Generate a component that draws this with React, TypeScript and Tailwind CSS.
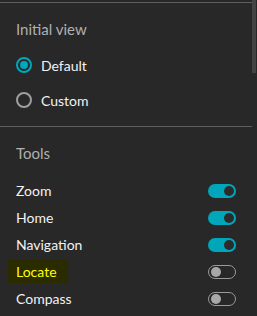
import React from "react";

const font = { fontFamily: "Lato, 'Open Sans', sans-serif" };

function Radio({ checked, label }: { checked: boolean; label: string }) {
  return (
    <div className="flex items-center h-[20px]">
      <div
        className={
          checked
            ? "w-[16px] h-[16px] rounded-full border-2 border-[#00a6b9] flex items-center justify-center"
            : "w-[16px] h-[16px] rounded-full border-2 border-[#9e9e9e]"
        }
      >
        {checked && <div className="w-[8px] h-[8px] rounded-full bg-[#00a6b9]" />}
      </div>
      <span className="ml-[9px] text-[14px] text-[#f2f2f2]">{label}</span>
    </div>
  );
}

function Toggle({ on }: { on: boolean }) {
  return on ? (
    <div className="w-[28px] h-[14px] rounded-full bg-[#00a6b9] flex items-center justify-end pr-[2px]">
      <div className="w-[10px] h-[10px] rounded-full bg-[#2b2b2b]" />
    </div>
  ) : (
    <div className="w-[28px] h-[14px] rounded-full border border-[#9a9a9a] flex items-center pl-[2px]">
      <div className="w-[10px] h-[10px] rounded-full bg-[#a8a8a8]" />
    </div>
  );
}

function ToolRow({ label, on, highlight }: { label: string; on: boolean; highlight?: boolean }) {
  return (
    <div className="flex items-center justify-between h-[27px] pr-[16px]">
      {highlight ? (
        <span className="text-[14px] text-[#ffff00] bg-[#2b2b00] -ml-[8px] pl-[8px] pr-[11px] py-[1px]">{label}</span>
      ) : (
        <span className="text-[14px] text-[#f2f2f2]">{label}</span>
      )}
      <Toggle on={on} />
    </div>
  );
}

export default function App() {
  return (
    <div className="w-[257px] h-[316px] bg-[#282828] relative overflow-hidden" style={font}>
      <div className="w-[252px]">
        <div className="h-[2px]" />
        <div className="border-t border-[#5e5e5e] pl-[16px] pt-[16px] h-[124px]">
          <div className="text-[15px] text-[#b0b0b0] h-[20px] leading-[20px]">Initial view</div>
          <div className="mt-[16px] flex flex-col gap-[15px]">
            <Radio checked label="Default" />
            <Radio checked={false} label="Custom" />
          </div>
        </div>
        <div className="border-t border-[#5e5e5e] pl-[16px] pt-[16px]">
          <div className="text-[15px] text-[#b0b0b0] h-[20px] leading-[20px]">Tools</div>
          <div className="mt-[14px] flex flex-col">
            <ToolRow label="Zoom" on />
            <ToolRow label="Home" on />
            <ToolRow label="Navigation" on />
            <ToolRow label="Locate" on={false} highlight />
            <ToolRow label="Compass" on={false} />
          </div>
        </div>
      </div>
      <div className="absolute right-[1px] top-0 w-[4px] h-[73px] bg-[#444444]" />
    </div>
  );
}
